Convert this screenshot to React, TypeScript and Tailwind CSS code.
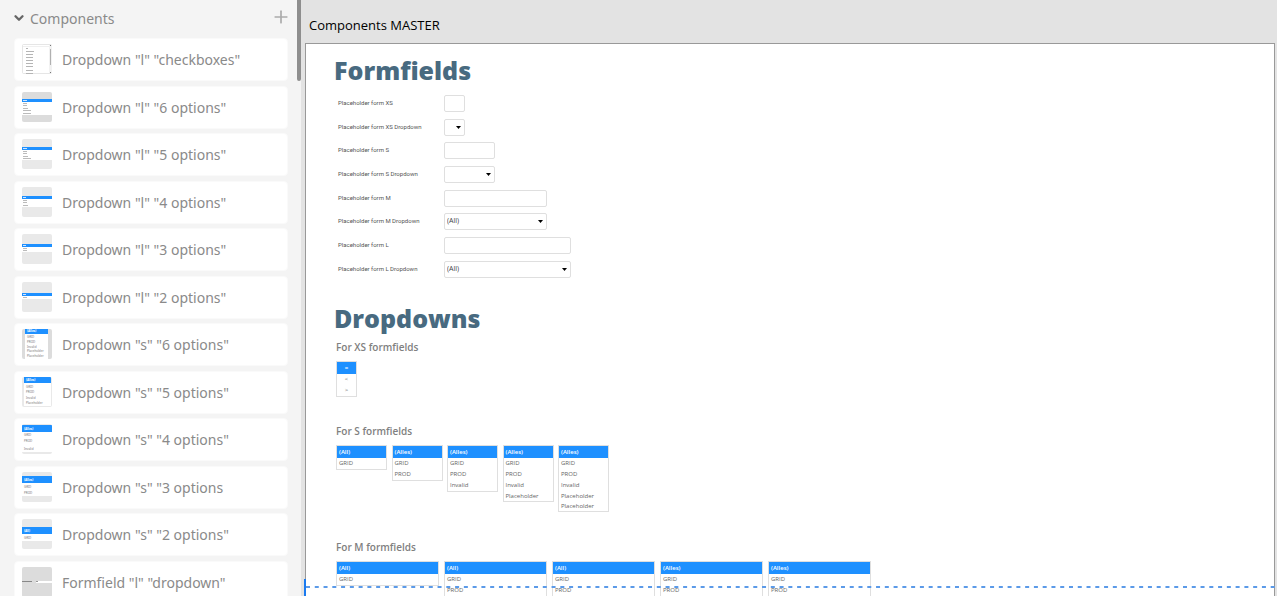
import { ChevronDown, Plus } from 'lucide-react';

interface ThumbProps {
  tipo: 'checkboxes' | 'l' | 's' | 'formfield';
  n: number;
}

interface Componente {
  nombre: string;
  tipo: ThumbProps['tipo'];
  n: number;
}

interface Campo {
  id: string;
  label: string;
  width: string;
  options?: string[];
}

const COMPONENTES: Componente[] = [
  { nombre: 'Dropdown "l" "checkboxes"', tipo: 'checkboxes', n: 9 },
  { nombre: 'Dropdown "l" "6 options"', tipo: 'l', n: 6 },
  { nombre: 'Dropdown "l" "5 options"', tipo: 'l', n: 5 },
  { nombre: 'Dropdown "l" "4 options"', tipo: 'l', n: 4 },
  { nombre: 'Dropdown "l" "3 options"', tipo: 'l', n: 3 },
  { nombre: 'Dropdown "l" "2 options"', tipo: 'l', n: 2 },
  { nombre: 'Dropdown "s" "6 options"', tipo: 's', n: 6 },
  { nombre: 'Dropdown "s" "5 options"', tipo: 's', n: 5 },
  { nombre: 'Dropdown "s" "4 options"', tipo: 's', n: 4 },
  { nombre: 'Dropdown "s" "3 options', tipo: 's', n: 3 },
  { nombre: 'Dropdown "s" "2 options"', tipo: 's', n: 2 },
  { nombre: 'Formfield "l" "dropdown"', tipo: 'formfield', n: 0 },
];

const CAMPOS: Campo[] = [
  { id: 'xs', label: 'Placeholder form XS', width: 'w-[21px]' },
  { id: 'xs-dd', label: 'Placeholder form XS Dropdown', width: 'w-[21px]', options: ['', '=', '<', '>'] },
  { id: 's', label: 'Placeholder form S', width: 'w-[51px]' },
  { id: 's-dd', label: 'Placeholder form S Dropdown', width: 'w-[51px]', options: ['', 'GRID', 'PROD'] },
  { id: 'm', label: 'Placeholder form M', width: 'w-[103px]' },
  { id: 'm-dd', label: 'Placeholder form M Dropdown', width: 'w-[103px]', options: ['(All)', 'GRID', 'PROD'] },
  { id: 'l', label: 'Placeholder form L', width: 'w-[127px]' },
  { id: 'l-dd', label: 'Placeholder form L Dropdown', width: 'w-[127px]', options: ['(All)', 'GRID', 'PROD'] },
];

const OPCIONES = ['GRID', 'PROD', 'Invalid', 'Placeholder', 'Placeholder'];

// Geometry of the "l" thumbnails: top of the blue bar, bottom of the list and text rows
const THUMB_L: Record<number, { top: number; bottom: number; rows: number[]; bg: string }> = {
  6: { top: 7, bottom: 23, rows: [11, 13, 16, 18, 21], bg: '#dcdcdc' },
  5: { top: 8, bottom: 21, rows: [12, 14, 17, 19], bg: '#e9e9e9' },
  4: { top: 9, bottom: 20, rows: [13, 15, 18], bg: '#e9e9e9' },
  3: { top: 10, bottom: 18, rows: [14, 16], bg: '#e9e9e9' },
  2: { top: 11, bottom: 17, rows: [15], bg: '#e9e9e9' },
};

// Geometry of the "s" thumbnails
const THUMB_S: Record<number, { x: number; w: number; top: number; head: number; bottom: number; rows: number[]; bg: string }> = {
  6: { x: 3, w: 23, top: 0, head: 5, bottom: 30, rows: [9, 14, 19, 23, 28], bg: '#dcdcdc' },
  5: { x: 2, w: 27, top: 0, head: 6, bottom: 29, rows: [11, 16, 22, 27], bg: '#e9e9e9' },
  4: { x: 0, w: 30, top: 1, head: 7, bottom: 28, rows: [12, 18, 26], bg: '#e9e9e9' },
  3: { x: 0, w: 30, top: 4, head: 7, bottom: 24, rows: [16, 22], bg: '#e9e9e9' },
  2: { x: 0, w: 30, top: 8, head: 7, bottom: 22, rows: [20], bg: '#e9e9e9' },
};

const FILAS_L = [4, 4, 5, 8, 8];

function Thumb({ tipo, n }: ThumbProps) {
  const l = THUMB_L[n];
  const s = THUMB_S[n];

  return (
    <svg viewBox="0 0 30 30" className="mb-px h-[30px] w-[30px] shrink-0 rounded-[2px]" aria-hidden="true">
      {tipo === 'checkboxes' && (
        <>
          <rect width="30" height="30" fill="#e6e6e6" />
          <rect x="1" y="1" width="26" height="28" fill="#fff" />
          <rect x="1" y="2" width="26" height="1" fill="#f0f0f0" />
          <rect x="27" y="1" width="3" height="28" fill="#f2f2f2" />
          <rect x="28" y="5" width="1" height="16" fill="#b0b0b0" />
          <rect x="28" y="1" width="1" height="1" fill="#777" />
          <rect x="28" y="28" width="1" height="1" fill="#777" />
          {[4, 7, 10, 13, 16, 19, 22, 26, 29].map((y, i) => (
            <rect key={y} x="4" y={y} width={i === 0 ? 2 : i === 1 ? 8 : 7} height="1" fill="#b5b5b5" />
          ))}
        </>
      )}
      {tipo === 'l' && (
        <>
          <rect width="30" height="30" fill={l.bg} />
          <rect y={l.top} width="30" height={l.bottom - l.top} fill="#fff" />
          <rect y={l.top} width="30" height="3" fill="#1e90ff" />
          <rect x="1" y={l.top + 1} width={n > 4 ? 4 : 3} height="1" fill="#cfe6ff" />
          {l.rows.map((y, i) => (
            <rect key={y} x="1" y={y} width={FILAS_L[i]} height="1" fill="#bbb" />
          ))}
        </>
      )}
      {tipo === 's' && (
        <>
          <rect width="30" height="30" fill={s.bg} />
          <rect x={s.x} y={s.top} width={s.w} height={s.bottom - s.top} fill="#fff" />
          <rect x={s.x} y={s.top} width={s.w} height={s.head} fill="#1e90ff" />
          <text x={s.x + 2} y={s.top + s.head - 2} fontSize="3" fontWeight="700" fill="#fff">
            {n === 2 ? '(All)' : '(Alles)'}
          </text>
          {s.rows.map((y, i) => (
            <text key={y} x={s.x + 2} y={y} fontSize="3" fill="#777">{OPCIONES[i]}</text>
          ))}
        </>
      )}
      {tipo === 'formfield' && (
        <>
          <rect width="30" height="30" fill="#dcdcdc" />
          <rect y="14" width="10" height="1" fill="#888" />
          <rect x="14" y="14" width="16" height="2" fill="#fff" />
          <rect x="14" y="14" width="2" height="1" fill="#999" />
        </>
      )}
    </svg>
  );
}

function Field({ id, label, width, options }: Campo) {
  return (
    <div className="flex h-6 items-start nth-[3n+2]:h-[23px]">
      <label htmlFor={id} className="w-[106px] font-[Roboto,sans-serif] text-[6px] leading-4 text-[#555]">{label}</label>
      {options ? (
        <div className={`relative h-[17px] ${width}`}>
          <select
            id={id}
            className="block h-full w-full appearance-none rounded-[2px] border border-[#dfdfdf] bg-white pl-[2px] text-[7px] text-[#444]"
          >
            {options.map((o) => <option key={o} value={o}>{o}</option>)}
          </select>
          <svg viewBox="0 0 5 3" className="pointer-events-none absolute top-[7px] right-1 h-[3px] w-[5px]" aria-hidden="true">
            <path d="M0 0h5L2.5 3z" fill="#000" />
          </svg>
        </div>
      ) : (
        <input id={id} type="text" className={`h-[17px] rounded-[2px] border border-[#dfdfdf] bg-white px-[2px] text-[7px] ${width}`} />
      )}
    </div>
  );
}

function OptionList({ title, items, width }: { title: string; items: string[]; width: string }) {
  return (
    <div className={`shrink-0 border border-[#dfdfdf] bg-white text-[6px] ${width}`}>
      <p className="h-3 bg-[#1e90ff] px-[2px] leading-3 font-semibold text-white">{title}</p>
      <ul>
        {items.map((item, i) => (
          <li key={i} className="h-[11px] px-[2px] leading-[11px] text-[#666] nth-[n+4]:h-[10px] nth-[n+4]:leading-[10px]">
            {item}
          </li>
        ))}
      </ul>
    </div>
  );
}

export default function App() {
  return (
    <div className="flex h-screen overflow-hidden bg-[#e3e3e3] font-['Open_Sans',sans-serif]">
      {/* Panel de componentes */}
      <aside className="flex w-[301px] shrink-0 bg-[#f4f4f4] font-['Noto_Sans',sans-serif]">
        <div className="min-w-0 flex-1">
          <div className="flex h-[38px] items-center justify-between pr-[6px] pb-[2px] pl-3">
            <button className="flex items-center gap-1 text-[14px] text-[#8a8a8a]">
              <ChevronDown size={14} strokeWidth={4} color="#666" />
              Components
            </button>
            <button aria-label="Add component" className="pb-[2px] text-[#aaa]">
              <Plus size={20} strokeWidth={2} />
            </button>
          </div>
          <ul className="mr-[9px] ml-[14px]">
            {COMPONENTES.map((c) => (
              <li
                key={c.nombre}
                className="flex h-[43px] items-center gap-[10px] rounded-[4px] border border-[#fafafa] bg-white px-[7px] text-[14px] text-[#8a8a8a] odd:mb-[5px] even:mb-1"
              >
                <Thumb tipo={c.tipo} n={c.n} />
                <span className="whitespace-nowrap">{c.nombre}</span>
              </li>
            ))}
          </ul>
        </div>
        <div className="w-1 shrink-0">
          <div className="h-[81px] rounded-b-[2px] bg-[#8e8e8e]" />
        </div>
      </aside>

      {/* Canvas */}
      <main className="relative flex min-w-0 flex-1 flex-col pr-[2px] pl-1">
        <h1 className="h-[43px] shrink-0 pt-[15px] pl-1 text-[13px] leading-5 text-black">Components MASTER</h1>

        <div className="min-h-0 flex-1 overflow-hidden border border-b-0 border-[#999] bg-white pt-[11px] pl-7">
          <h2 className="h-10 text-[25px] leading-[30px] font-extrabold text-[#486a80]">Formfields</h2>
          <div className="h-[208px] pl-1">
            {CAMPOS.map((campo) => <Field key={campo.id} {...campo} />)}
          </div>

          <h2 className="h-9 text-[25px] leading-[30px] font-extrabold text-[#486a80]">Dropdowns</h2>
          <div className="pl-[2px] text-[#808080]">
            <section className="h-[84px]">
              <h3 className="h-[22px] text-[10px] leading-4 font-semibold">For XS formfields</h3>
              <div className="flex items-start text-center">
                <OptionList title="=" items={['<', '>']} width="w-[21px]" />
              </div>
            </section>

            <section className="h-[116px]">
              <h3 className="h-[22px] text-[10px] leading-4 font-semibold">For S formfields</h3>
              <div className="flex w-[273px] items-start justify-between">
                {OPCIONES.map((_, i) => (
                  <OptionList key={i} title={i === 0 ? '(All)' : '(Alles)'} items={OPCIONES.slice(0, i + 1)} width="w-[51px]" />
                ))}
              </div>
            </section>

            <section>
              <h3 className="h-[22px] text-[10px] leading-4 font-semibold">For M formfields</h3>
              <div className="flex items-start gap-[5px]">
                {OPCIONES.map((_, i) => (
                  <OptionList key={i} title={i < 3 ? '(All)' : '(Alles)'} items={OPCIONES.slice(0, i + 1)} width="w-[103px]" />
                ))}
              </div>
            </section>
          </div>
        </div>

        {/* Viewport height guide */}
        <div className="pointer-events-none absolute right-[2px] bottom-0 left-[3px] flex h-[17px] border-l-2 border-[#1a7af0]">
          <svg className="mt-[7px] h-[2px] w-full" aria-hidden="true">
            <line x1="0" y1="1" x2="100%" y2="1" stroke="#5b9ae8" strokeWidth="2" strokeDasharray="4 4.77" />
          </svg>
        </div>
      </main>
    </div>
  );
}
